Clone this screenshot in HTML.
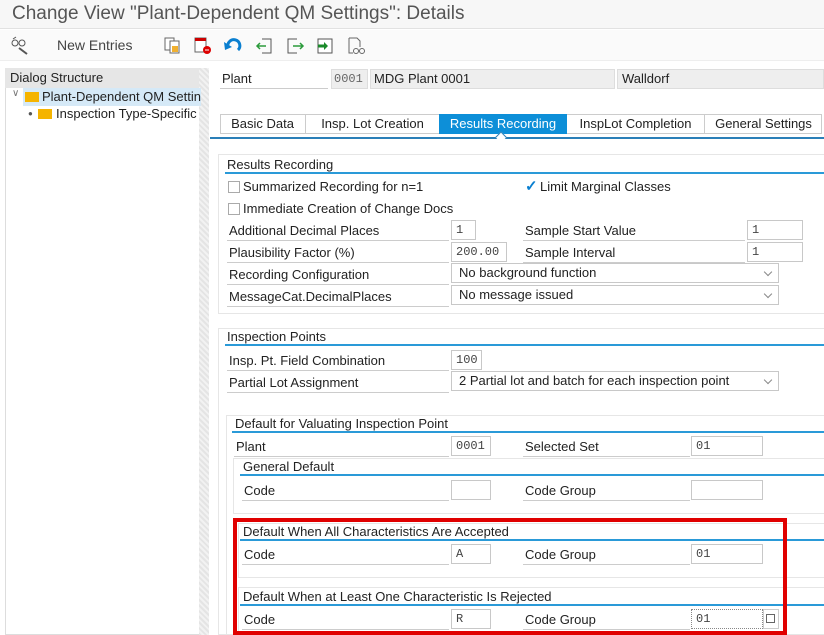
<!DOCTYPE html>
<html><head><style>
*{box-sizing:border-box;margin:0;padding:0}
body{width:824px;height:635px;overflow:hidden;background:#fff;font-family:"Liberation Sans",Arial,sans-serif;font-size:13px;color:#222;position:relative}
.a{position:absolute;white-space:nowrap}
.lbl{position:absolute;height:20px;line-height:19px;border-bottom:1px solid #ccc;padding-left:2px;font-size:13px}
.inp{position:absolute;height:20px;border:1px solid #c8c8c8;background:#fff;font-family:"Liberation Mono",monospace;font-size:12px;line-height:18px;padding-left:4px;color:#444}
.dd{position:absolute;height:20px;border:1px solid #c8c8c8;background:#fff;font-size:13px;line-height:18px;padding-left:7px}
.dd:after{content:"";position:absolute;right:7px;top:5px;width:5px;height:5px;border-right:1px solid #888;border-bottom:1px solid #888;transform:rotate(45deg)}
.gt{position:absolute;font-size:13px;height:18px;line-height:17px;border-bottom:2px solid #2a9ad8}
.gb{position:absolute;border:1px solid #e6e6e6}
.cb{position:absolute;width:12px;height:12px;border:1px solid #aaa;background:#fff}
</style></head><body>
<div class="a" style="left:0;top:0;width:824px;height:29px;background:#f7f7f7;border-bottom:1px solid #e2e2e2"></div>
<div class="a" style="left:12px;top:3px;font-size:19px;color:#555">Change View "Plant-Dependent QM Settings": Details</div>
<div class="a" style="left:0;top:30px;width:824px;height:31px;background:#fafafa;border-bottom:1px solid #eee"></div>
<svg class="a" style="left:10px;top:36px" width="20" height="20" viewBox="0 0 20 20"><circle cx="5" cy="7" r="3" fill="none" stroke="#555"/><circle cx="12" cy="7" r="3" fill="none" stroke="#555"/><path d="M9 12 L17 18" stroke="#555" stroke-width="2"/><path d="M3 3 L6 1" stroke="#555"/></svg>
<div class="a" style="left:57px;top:37px;font-size:14px;color:#444">New Entries</div>
<svg class="a" style="left:163px;top:36px" width="20" height="20"><rect x="2" y="2" width="9" height="12" fill="#fff" stroke="#666"/><rect x="7" y="5" width="9" height="12" fill="#fff" stroke="#666"/><rect x="9" y="10" width="6" height="6" fill="#f0b030"/></svg>
<svg class="a" style="left:193px;top:36px" width="20" height="20"><rect x="2" y="2" width="11" height="14" fill="#fff" stroke="#666"/><rect x="2" y="2" width="11" height="3" fill="#c00"/><circle cx="14" cy="14" r="4" fill="#d00"/><path d="M12 14h4" stroke="#fff"/></svg>
<svg class="a" style="left:223px;top:36px" width="20" height="20"><path d="M5 11 A6 6 0 1 1 15 14" fill="none" stroke="#0a7fd0" stroke-width="3"/><path d="M1 6 L9 11 L2 14Z" fill="#0a7fd0"/></svg>
<svg class="a" style="left:255px;top:36px" width="20" height="20"><path d="M7 3h9v14H7" fill="none" stroke="#555"/><path d="M2 10h9M5 7l-3 3 3 3" fill="none" stroke="#2a9a3a" stroke-width="1.5"/></svg>
<svg class="a" style="left:285px;top:36px" width="20" height="20"><path d="M12 3H3v14h9" fill="none" stroke="#555"/><path d="M8 10h10M15 7l3 3-3 3" fill="none" stroke="#2a9a3a" stroke-width="1.5"/></svg>
<svg class="a" style="left:315px;top:36px" width="20" height="20"><rect x="3" y="3" width="14" height="14" fill="#fff" stroke="#555"/><path d="M3 10h6" stroke="#1a8a2a" stroke-width="3"/><path d="M9 6l4 4-4 4z" fill="#1a8a2a"/></svg>
<svg class="a" style="left:346px;top:36px" width="20" height="20"><path d="M3 2h8l3 3v6" fill="none" stroke="#666"/><path d="M3 2v15h4" fill="none" stroke="#666"/><circle cx="10" cy="15" r="2.5" fill="none" stroke="#666"/><circle cx="16" cy="15" r="2.5" fill="none" stroke="#666"/></svg>

<div class="a" style="left:5px;top:68px;width:196px;height:567px;background:#fff;border:1px solid #ddd"></div>
<div class="a" style="left:5px;top:68px;width:196px;height:20px;background:#e6e6e6;padding:2px 5px;font-size:13px">Dialog Structure</div>
<div class="a" style="left:199px;top:68px;width:10px;height:567px;background:repeating-linear-gradient(45deg,#e4e4e4 0 2px,#f2f2f2 2px 4px)"></div>
<div class="a" style="left:12px;top:88px;font-size:10px;color:#777">&#8744;</div>
<div class="a" style="left:23px;top:88px;width:178px;height:18px;background:#d5e9f7"></div>
<div class="a" style="left:25px;top:92px;width:14px;height:10px;background:#f5b400"></div>
<div class="a" style="left:42px;top:89px;font-size:13px;width:159px;overflow:hidden">Plant-Dependent QM Settings</div>
<div class="a" style="left:28px;top:109px;font-size:8px;color:#555">&#9679;</div>
<div class="a" style="left:38px;top:109px;width:14px;height:10px;background:#f5b400"></div>
<div class="a" style="left:56px;top:106px;font-size:13px;width:145px;overflow:hidden">Inspection Type-Specific Settings</div>

<div class="lbl" style="left:220px;top:69px;width:108px">Plant</div>
<div class="a" style="left:331px;top:69px;width:37px;height:20px;background:#eee;border:1px solid #ddd;font-family:'Liberation Mono',monospace;font-size:12px;line-height:18px;padding-left:2px;color:#666">0001</div>
<div class="a" style="left:370px;top:69px;width:245px;height:20px;background:#eee;border:1px solid #ddd;line-height:18px;padding-left:3px">MDG Plant 0001</div>
<div class="a" style="left:617px;top:69px;width:207px;height:20px;background:#eee;border:1px solid #ddd;line-height:18px;padding-left:4px">Walldorf</div>

<div class="a" style="left:220px;top:114px;width:602px;height:20px;border:1px solid #ccc;background:#fff"></div>
<div class="a" style="left:220px;top:115px;width:86px;text-align:center;line-height:18px;border-right:1px solid #ccc">Basic Data</div>
<div class="a" style="left:306px;top:115px;width:133px;text-align:center;line-height:18px">Insp. Lot Creation</div>
<div class="a" style="left:439px;top:114px;width:128px;height:20px;background:#0d8fd8;color:#fff;text-align:center;line-height:19px">Results Recording</div>
<div class="a" style="left:567px;top:115px;width:138px;text-align:center;line-height:18px;border-right:1px solid #ccc">InspLot Completion</div>
<div class="a" style="left:705px;top:115px;width:117px;text-align:center;line-height:18px">General Settings</div>
<div class="a" style="left:210px;top:137px;width:614px;height:2px;background:#2a7fb8"></div>
<div class="a" style="left:497px;top:133px;width:8px;height:8px;background:#fff;border-left:1px solid #2a7fb8;border-top:1px solid #2a7fb8;transform:rotate(45deg)"></div>

<div class="gb" style="left:218px;top:154px;width:610px;height:160px"></div>
<div class="gt" style="left:225px;top:156px;width:599px;padding-left:2px">Results Recording</div>
<div class="cb" style="left:228px;top:181px"></div><div class="a" style="left:243px;top:179px">Summarized Recording for n=1</div>
<div class="a" style="left:525px;top:177px;color:#0a7fd0;font-size:15px;font-weight:bold">&#10003;</div><div class="a" style="left:540px;top:179px">Limit Marginal Classes</div>
<div class="cb" style="left:228px;top:203px"></div><div class="a" style="left:243px;top:201px">Immediate Creation of Change Docs</div>
<div class="lbl" style="left:227px;top:221px;width:222px">Additional Decimal Places</div><div class="inp" style="left:451px;top:220px;width:25px">1</div>
<div class="lbl" style="left:523px;top:221px;width:222px">Sample Start Value</div><div class="inp" style="left:747px;top:220px;width:56px">1</div>
<div class="lbl" style="left:227px;top:243px;width:222px">Plausibility Factor (%)</div><div class="inp" style="left:451px;top:242px;width:56px">200.00</div>
<div class="lbl" style="left:523px;top:243px;width:222px">Sample Interval</div><div class="inp" style="left:747px;top:242px;width:56px">1</div>
<div class="lbl" style="left:227px;top:265px;width:222px">Recording Configuration</div><div class="dd" style="left:451px;top:263px;width:328px">No background function</div>
<div class="lbl" style="left:227px;top:287px;width:222px">MessageCat.DecimalPlaces</div><div class="dd" style="left:451px;top:285px;width:328px">No message issued</div>

<div class="gb" style="left:218px;top:328px;width:610px;height:307px"></div>
<div class="gt" style="left:225px;top:328px;width:599px;padding-left:2px">Inspection Points</div>
<div class="lbl" style="left:227px;top:351px;width:222px">Insp. Pt. Field Combination</div><div class="inp" style="left:451px;top:350px;width:31px">100</div>
<div class="lbl" style="left:227px;top:373px;width:222px">Partial Lot Assignment</div><div class="dd" style="left:451px;top:371px;width:328px">2 Partial lot and batch for each inspection point</div>

<div class="gb" style="left:226px;top:415px;width:602px;height:220px"></div>
<div class="gt" style="left:232px;top:415px;width:592px;padding-left:3px">Default for Valuating Inspection Point</div>
<div class="lbl" style="left:234px;top:437px;width:215px">Plant</div><div class="inp" style="left:451px;top:436px;width:40px">0001</div>
<div class="lbl" style="left:523px;top:437px;width:167px">Selected Set</div><div class="inp" style="left:691px;top:436px;width:72px">01</div>
<div class="gb" style="left:233px;top:458px;width:595px;height:56px"></div>
<div class="gt" style="left:240px;top:458px;width:584px;padding-left:3px">General Default</div>
<div class="lbl" style="left:242px;top:481px;width:207px">Code</div><div class="inp" style="left:451px;top:480px;width:40px"></div>
<div class="lbl" style="left:523px;top:481px;width:167px">Code Group</div><div class="inp" style="left:691px;top:480px;width:72px"></div>

<div class="gb" style="left:238px;top:523px;width:590px;height:55px"></div>
<div class="gt" style="left:240px;top:523px;width:584px;padding-left:3px">Default When All Characteristics Are Accepted</div>
<div class="lbl" style="left:242px;top:545px;width:207px">Code</div><div class="inp" style="left:451px;top:544px;width:40px">A</div>
<div class="lbl" style="left:523px;top:545px;width:167px">Code Group</div><div class="inp" style="left:691px;top:544px;width:72px">01</div>
<div class="gb" style="left:238px;top:587px;width:590px;height:48px"></div>
<div class="gt" style="left:240px;top:588px;width:584px;padding-left:3px">Default When at Least One Characteristic Is Rejected</div>
<div class="lbl" style="left:242px;top:610px;width:207px">Code</div><div class="inp" style="left:451px;top:609px;width:40px">R</div>
<div class="lbl" style="left:523px;top:610px;width:167px">Code Group</div><div class="inp" style="left:691px;top:609px;width:72px;border:1px dotted #888">01</div>
<div class="a" style="left:763px;top:609px;width:16px;height:20px;border:1px solid #ccc;background:#fff"></div>
<div class="a" style="left:766px;top:614px;width:9px;height:9px;border:1px solid #666"></div>

<div class="a" style="left:233px;top:518px;width:554px;height:117px;border:4px solid #e00000"></div>
</body></html>
